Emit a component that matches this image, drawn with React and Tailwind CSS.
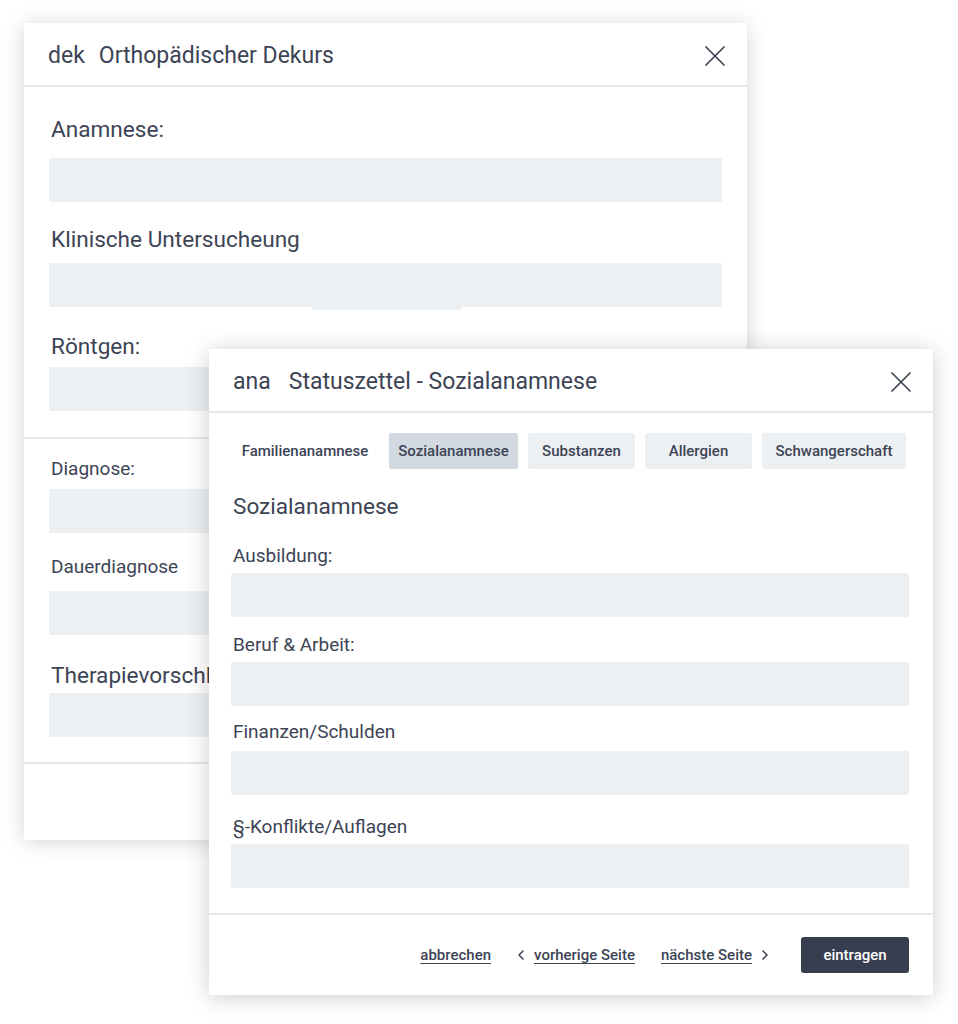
import React from "react";

const TEXT = "text-[#3d4455]";

function CloseIcon() {
  return (
    <svg width="20" height="20" viewBox="0 0 20 20" className="shrink-0">
      <path d="M1 1 L19 19 M19 1 L1 19" stroke="#3d4455" strokeWidth="1.7" strokeLinecap="round" fill="none" />
    </svg>
  );
}

function Header({ code, title, gap }) {
  return (
    <div className="h-[64px] border-b-2 border-[#e7e7e9] flex items-center justify-between pl-[24px] pr-[22px] pt-[3px]">
      <div className={`flex items-center text-[23px] leading-[28px] ${TEXT}`}>
        <span>{code}</span>
        <span className={gap}>{title}</span>
      </div>
      <CloseIcon />
    </div>
  );
}

function Input({ className = "" }) {
  return <div className={`h-[44px] bg-[#edf0f3] rounded-[2px] ${className}`} />;
}

function ChevronLeft() {
  return (
    <svg width="8" height="12" viewBox="0 0 8 12" className="shrink-0">
      <path d="M6 2 L2 6 L6 10" stroke="#3d4455" strokeWidth="1.6" fill="none" strokeLinecap="round" strokeLinejoin="round" />
    </svg>
  );
}

function ChevronRight() {
  return (
    <svg width="8" height="12" viewBox="0 0 8 12" className="shrink-0">
      <path d="M2 2 L6 6 L2 10" stroke="#3d4455" strokeWidth="1.6" fill="none" strokeLinecap="round" strokeLinejoin="round" />
    </svg>
  );
}

function BackWindow() {
  return (
    <div className="absolute left-[24px] top-[23px] w-[723px] h-[817px] bg-white shadow-[0_2px_20px_rgba(0,0,0,0.17)] flex flex-col">
      <Header code="dek" title="Orthopädischer Dekurs" gap="ml-[14px]" />
      <div className="px-[25px] pt-[29px] pb-[26px] border-b-2 border-[#e7e7e9]">
        <div className={`pl-[2px] text-[22.6px] leading-[28px] mb-[14px] ${TEXT}`}>Anamnese:</div>
        <Input />
        <div className={`pl-[2px] text-[22.6px] leading-[28px] mt-[24px] mb-[9px] ${TEXT}`}>Klinische Untersucheung</div>
        <Input />
        <div className="ml-[263px] w-[149px] h-[3px] bg-[#edf0f3]" />
        <div className={`pl-[2px] text-[22.6px] leading-[28px] mt-[23px] mb-[6px] ${TEXT}`}>Röntgen:</div>
        <Input />
      </div>
      <div className="px-[25px] pt-[18px] pb-[25px] border-b-2 border-[#e7e7e9]">
        <div className={`pl-[2px] text-[19px] leading-[24px] mb-[8px] ${TEXT}`}>Diagnose:</div>
        <Input />
        <div className={`pl-[2px] text-[19px] leading-[24px] mt-[22px] mb-[12px] ${TEXT}`}>Dauerdiagnose</div>
        <Input />
        <div className={`pl-[2px] text-[22.6px] leading-[28px] mt-[27px] mb-[3px] ${TEXT}`}>Therapievorschlag</div>
        <Input />
      </div>
      <div className="flex-1" />
    </div>
  );
}

const tabs = [
  { label: "Familienanamnese", cls: "w-[148px] bg-white" },
  { label: "Sozialanamnese", cls: "w-[129px] bg-[#d2d9e1]" },
  { label: "Substanzen", cls: "w-[107px] bg-[#edf0f3]" },
  { label: "Allergien", cls: "w-[107px] bg-[#edf0f3]" },
  { label: "Schwangerschaft", cls: "w-[144px] bg-[#edf0f3]" },
];

function FrontWindow() {
  return (
    <div className="absolute left-[209px] top-[349px] w-[724px] h-[646px] bg-white shadow-[0_2px_22px_rgba(0,0,0,0.2)] flex flex-col">
      <Header code="ana" title="Statuszettel - Sozialanamnese" gap="ml-[18px]" />
      <div className="pl-[22px] pr-[24px] pt-[20px] pb-[25px] border-b-2 border-[#e7e7e9]">
        <div className="flex gap-[10px]">
          {tabs.map((t) => (
            <div
              key={t.label}
              className={`h-[36px] flex items-center justify-center rounded-[2px] text-[15px] font-medium ${TEXT} ${t.cls}`}
            >
              {t.label}
            </div>
          ))}
        </div>
        <div className={`pl-[2px] text-[22.6px] leading-[28px] mt-[24px] ${TEXT}`}>Sozialanamnese</div>
        <div className={`pl-[2px] text-[19px] leading-[24px] mt-[23px] mb-[5px] ${TEXT}`}>Ausbildung:</div>
        <Input />
        <div className={`pl-[2px] text-[19px] leading-[24px] mt-[16px] mb-[5px] ${TEXT}`}>Beruf &amp; Arbeit:</div>
        <Input />
        <div className={`pl-[2px] text-[19px] leading-[24px] mt-[14px] mb-[7px] ${TEXT}`}>Finanzen/Schulden</div>
        <Input />
        <div className={`pl-[2px] text-[19px] leading-[24px] mt-[20px] mb-[5px] ${TEXT}`}>§-Konflikte/Auflagen</div>
        <Input />
      </div>
      <div className={`flex-1 flex items-center justify-end pr-[24px] text-[15px] font-medium ${TEXT}`}>
        <span className="underline underline-offset-[3px]">abbrechen</span>
        <span className="ml-[26px]"><ChevronLeft /></span>
        <span className="ml-[9px] underline underline-offset-[3px]">vorherige Seite</span>
        <span className="ml-[26px] underline underline-offset-[3px]">nächste Seite</span>
        <span className="ml-[9px]"><ChevronRight /></span>
        <button className="ml-[32px] w-[108px] h-[36px] rounded-[3px] bg-[#373e4f] text-white text-[15px] font-medium">
          eintragen
        </button>
      </div>
    </div>
  );
}

export default function App() {
  return (
    <div className="relative w-[958px] h-[1024px] bg-white overflow-hidden font-['Roboto',sans-serif]">
      <BackWindow />
      <FrontWindow />
    </div>
  );
}
